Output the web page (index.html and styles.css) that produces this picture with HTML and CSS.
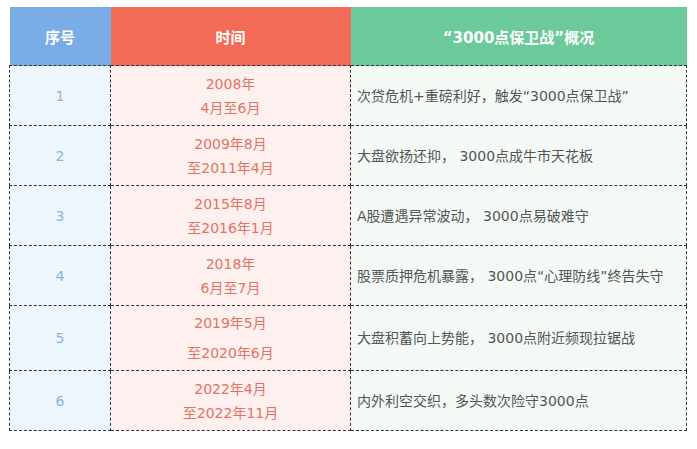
FILE: index.html
```html
<!DOCTYPE html>
<html lang="zh">
<head>
<meta charset="utf-8">
<link rel="stylesheet" href="styles.css">
</head>
<body>
<table class="tbl">
  <colgroup>
    <col class="c1"><col class="c2"><col class="c3">
  </colgroup>
  <thead>
    <tr class="head">
      <th class="h-blue">序号</th>
      <th class="h-red">时间</th>
      <th class="h-green">“3000点保卫战”概况</th>
    </tr>
  </thead>
  <tbody>
    <tr class="row">
      <td class="num">1</td>
      <td class="time">2008年<br>4月至6月</td>
      <td class="desc">次贷危机+重磅利好，触发“3000点保卫战”</td>
    </tr>
    <tr class="row">
      <td class="num">2</td>
      <td class="time">2009年8月<br>至2011年4月</td>
      <td class="desc">大盘欲扬还抑， 3000点成牛市天花板</td>
    </tr>
    <tr class="row">
      <td class="num">3</td>
      <td class="time">2015年8月<br>至2016年1月</td>
      <td class="desc">A股遭遇异常波动， 3000点易破难守</td>
    </tr>
    <tr class="row">
      <td class="num">4</td>
      <td class="time">2018年<br>6月至7月</td>
      <td class="desc">股票质押危机暴露， 3000点“心理防线”终告失守</td>
    </tr>
    <tr class="row tall">
      <td class="num">5</td>
      <td class="time wide">2019年5月<br>至2020年6月</td>
      <td class="desc">大盘积蓄向上势能， 3000点附近频现拉锯战</td>
    </tr>
    <tr class="row">
      <td class="num">6</td>
      <td class="time">2022年4月<br>至2022年11月</td>
      <td class="desc">内外利空交织，多头数次险守3000点</td>
    </tr>
  </tbody>
</table>
</body>
</html>
```

FILE: styles.css
```css
html, body {
  margin: 0;
  padding: 0;
  background: #ffffff;
}
body {
  padding: 7px 0 0 9px;
  font-family: "DejaVu Sans", "Noto Sans CJK SC", sans-serif;
}
.tbl {
  border-collapse: collapse;
  table-layout: fixed;
  width: 677px;
  font-size: 14px;
}
.c1 { width: 101px; }
.c2 { width: 240px; }
.c3 { width: 336px; }

.head th {
  height: 58px;
  padding: 0;
  color: #ffffff;
  font-weight: bold;
  font-size: 15px;
  text-align: center;
  vertical-align: middle;
  border: none;
}
.h-blue { background: #79ade5; }
.h-red { background: #f26b56; }
.h-green { background: #6cca9a; }

.row td {
  height: 59px;
  padding: 0;
  border: 1px dashed #333333;
  vertical-align: middle;
  line-height: 24px;
}
.row.tall td { height: 64px; }
.num {
  background: #eef6fd;
  color: #8fb3d6;
  text-align: center;
}
.time {
  background: #fdf0ef;
  color: #e27461;
  text-align: center;
}
.time.wide { line-height: 30px; }
.desc {
  background: #f3faf6;
  color: #555555;
  text-align: left;
  padding-left: 6px !important;
}
```
